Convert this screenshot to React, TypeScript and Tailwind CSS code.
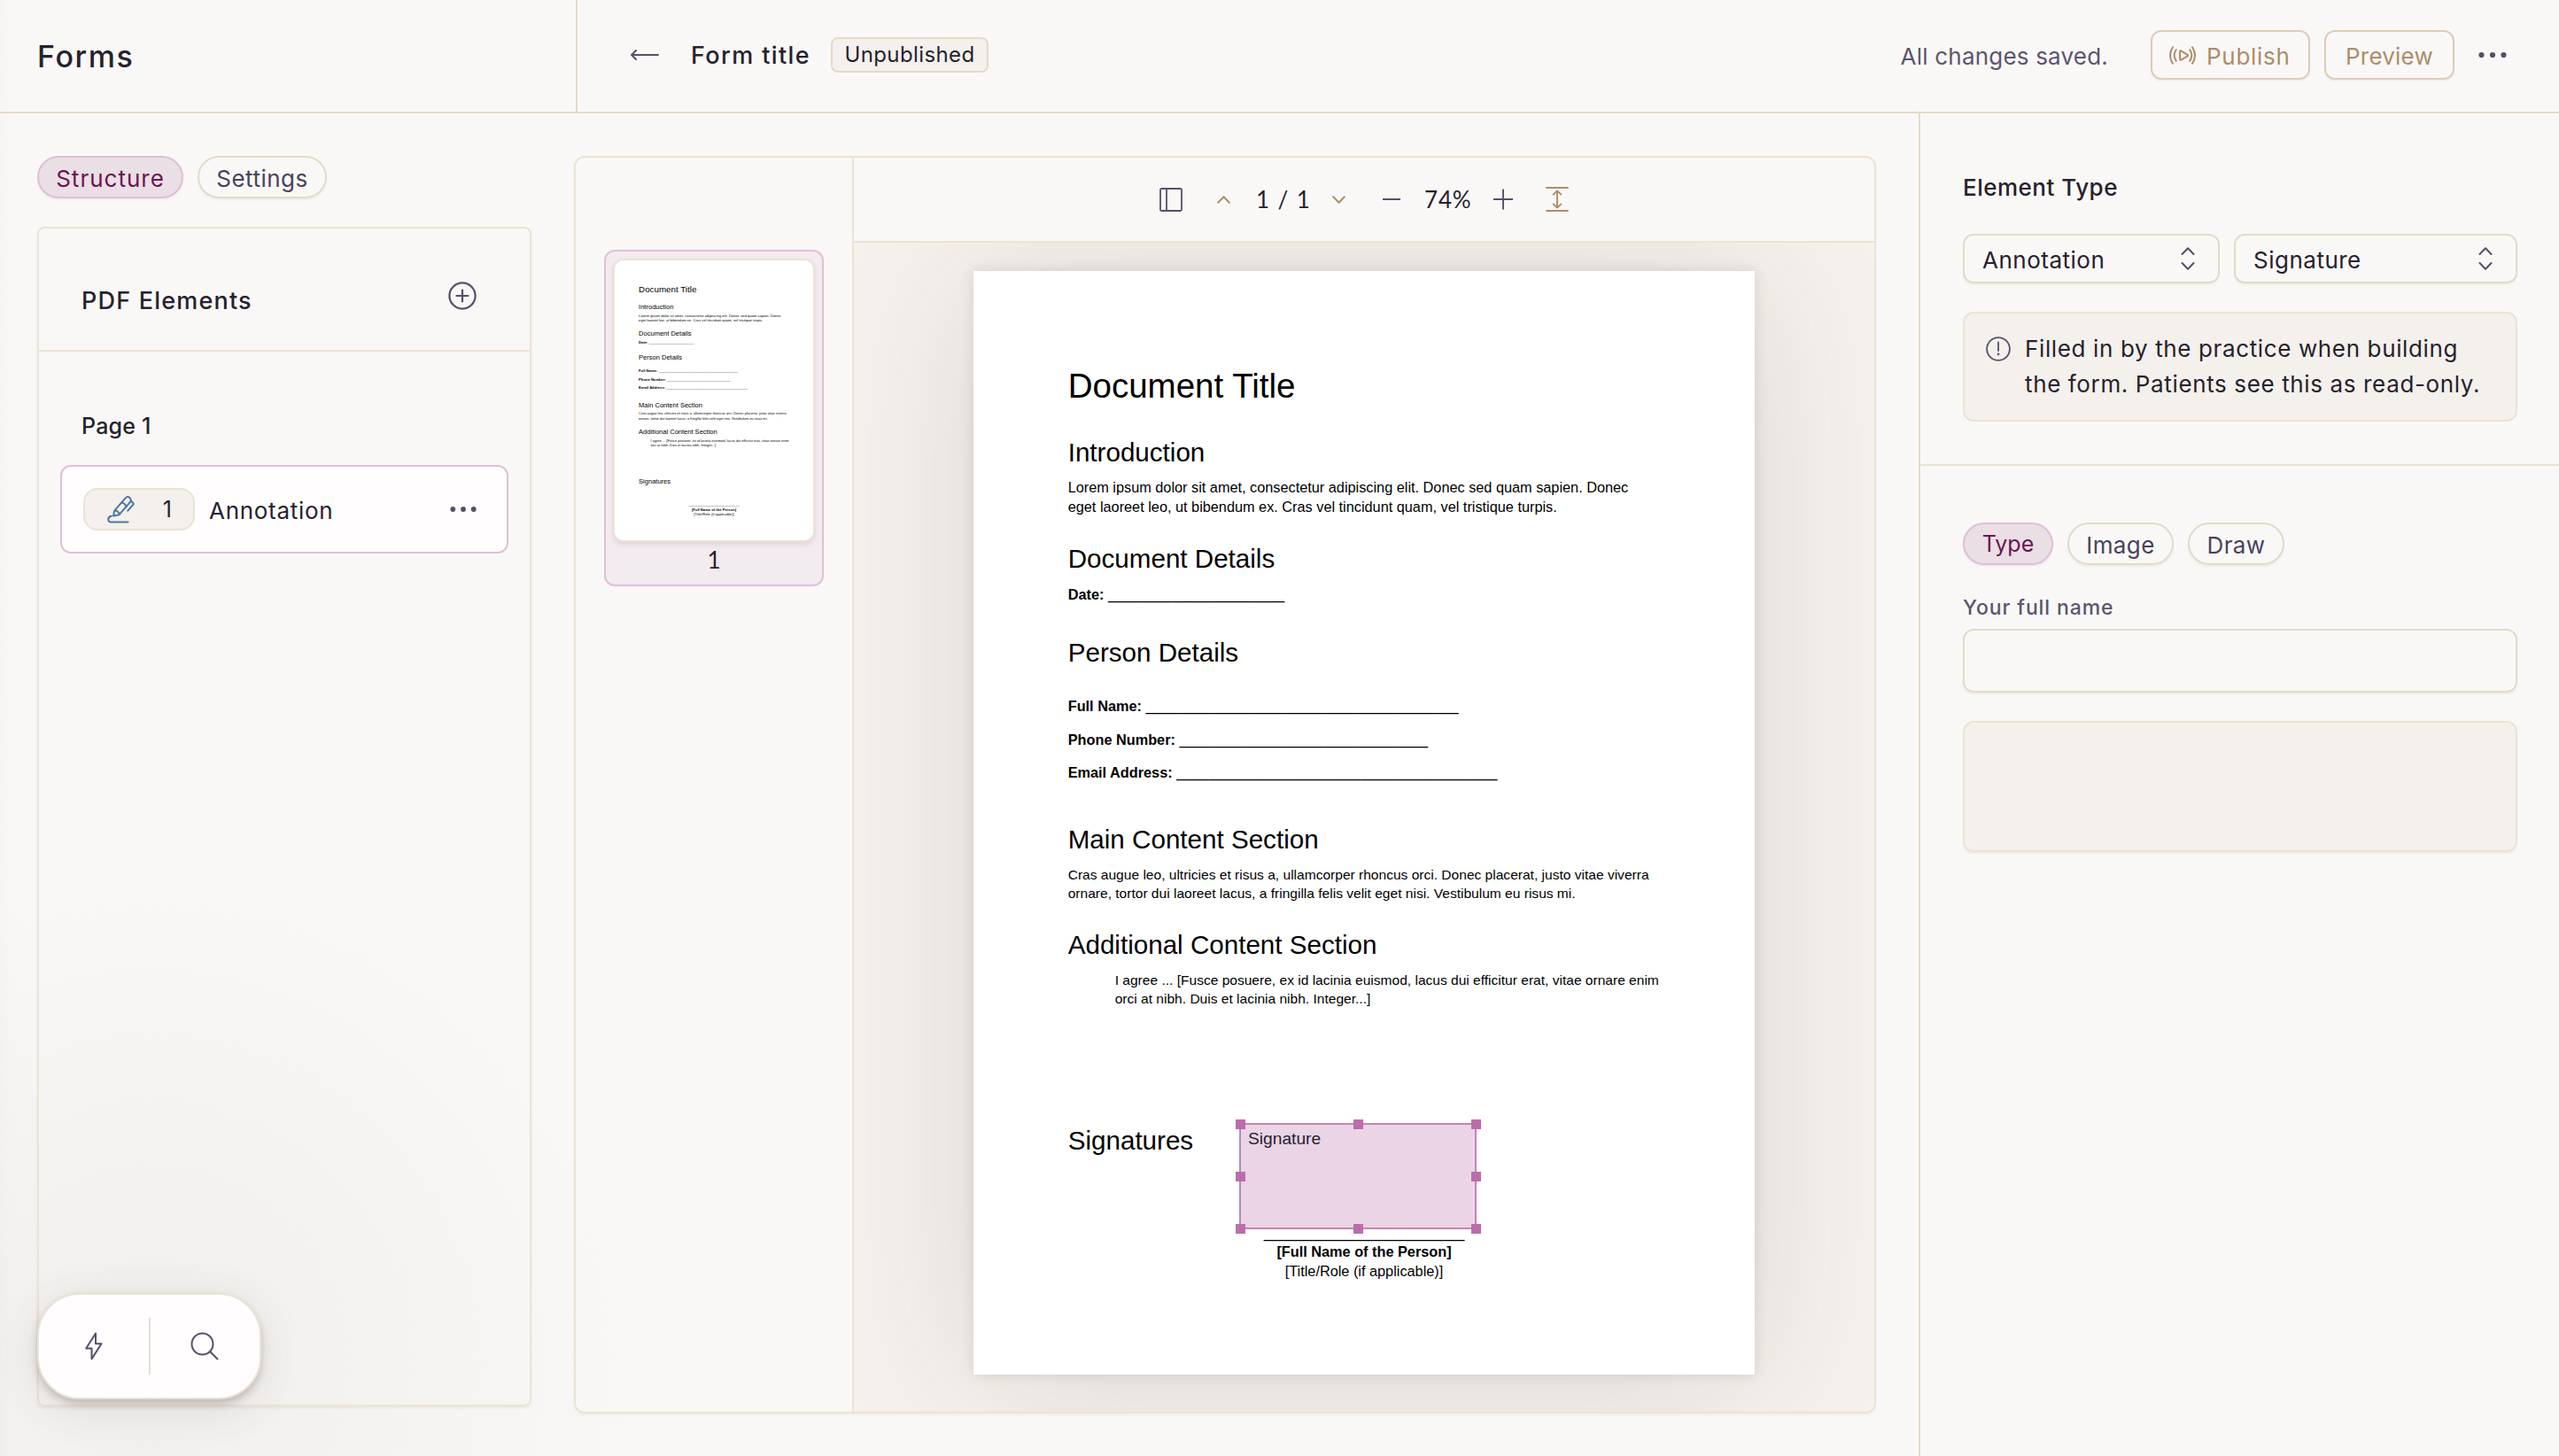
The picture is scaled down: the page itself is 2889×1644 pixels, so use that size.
import React from 'react';

interface IconProps {
    className?: string;
}

const BackArrowIcon: React.FC<IconProps> = ({ className }) => (
    <svg className={className} width="32" height="12" viewBox="0 0 32 12" fill="none" stroke="currentColor" strokeWidth="2" strokeLinecap="round" strokeLinejoin="round">
        <path d="M31 6H1M6 1L1 6l5 5" />
    </svg>
);

const BroadcastIcon: React.FC<IconProps> = ({ className }) => (
    <svg className={className} width="30" height="21" viewBox="0 0 30 21" fill="none" stroke="currentColor" strokeWidth="2" strokeLinecap="round" strokeLinejoin="round">
        <path d="M4 1.3C.3 7 .3 14 4 19.7M7.700 4.200c-2.600 4-2.600 8.600 0 12.600" />
        <path d="M12 6.200v8.600c0 .8.700 1.200 1.400.8l7.200-4.200c.6-.4.6-1.200 0-1.600l-7.200-4.400c-.7-.4-1.400 0-1.400.8z" />
        <path d="M23.300 4.200c2.600 4 2.600 8.600 0 12.600M26 1.300c3.700 5.700 3.700 12.700 0 18.400" />
    </svg>
);

const DotsIcon: React.FC<IconProps> = ({ className }) => (
    <svg className={className} width="32" height="8" viewBox="0 0 32 8" fill="currentColor">
        <circle cx="3.5" cy="4" r="3.1" />
        <circle cx="16" cy="4" r="3.1" />
        <circle cx="28.5" cy="4" r="3.1" />
    </svg>
);

const PlusCircleIcon: React.FC<IconProps> = ({ className }) => (
    <svg className={className} width="32" height="32" viewBox="0 0 32 32" fill="none" stroke="currentColor" strokeWidth="2.2" strokeLinecap="round">
        <circle cx="16" cy="16" r="14.6" />
        <path d="M16 9.500v13M9.500 16h13" />
    </svg>
);

const PenIcon: React.FC<IconProps> = ({ className }) => (
    <svg className={className} width="31" height="31" viewBox="0 0 31 31" fill="none" stroke="currentColor" strokeWidth="2" strokeLinecap="round" strokeLinejoin="round">
        <path d="M7 22.600l1-5.200c.1-.5.300-.9.600-1.200L20.400 2.600c1.400-1.600 3.600-1.800 5.100-.5s1.700 3.500.3 5.100L14 20.700c-.3.300-.7.600-1.100.7L7 22.600z" />
        <path d="M8.800 16.300c2.400.4 4.300 2 5 4.500M16.300 7.500c2.500.4 4.500 2.200 5.200 4.800" />
        <path d="M26.600 5.500l2.200 2c.8.7.9 1.900.2 2.700l-5.700 6.500" />
        <path d="M4.800 22.800C.2 23 .2 29.600 4.200 29.600h19.300" />
    </svg>
);

const SidebarIcon: React.FC<IconProps> = ({ className }) => (
    <svg className={className} width="26" height="27" viewBox="0 0 26 27" fill="none" stroke="currentColor" strokeWidth="1.8">
        <rect x="1" y="1" width="24" height="25" rx="1.5" />
        <path d="M8 1v25" />
    </svg>
);

const ChevronIcon: React.FC<IconProps> = ({ className }) => (
    <svg className={className} width="15" height="9" viewBox="0 0 15 9" fill="none" stroke="currentColor" strokeWidth="2" strokeLinecap="round" strokeLinejoin="round">
        <path d="M1.200 7.800L7.500 1.200l6.300 6.600" />
    </svg>
);

const FitHeightIcon: React.FC<IconProps> = ({ className }) => (
    <svg className={className} width="26" height="28" viewBox="0 0 26 28" fill="none" stroke="currentColor" strokeWidth="1.9" strokeLinecap="round" strokeLinejoin="round">
        <path d="M1 1h24M1 27h24M13 4.800v18.400M8.600 8.600L13 4.400l4.400 4.200M8.600 19.400l4.400 4.200 4.400-4.200" />
    </svg>
);

const SelectorIcon: React.FC<IconProps> = ({ className }) => (
    <svg className={className} width="16" height="26" viewBox="0 0 16 26" fill="none" stroke="currentColor" strokeWidth="2" strokeLinecap="round" strokeLinejoin="round">
        <path d="M1.500 8L8 1.200 14.500 8M1.500 18L8 24.800l6.500-6.800" />
    </svg>
);

const AlertIcon: React.FC<IconProps> = ({ className }) => (
    <svg className={className} width="28" height="28" viewBox="0 0 28 28" fill="none" stroke="currentColor" strokeWidth="1.9" strokeLinecap="round">
        <circle cx="14" cy="14" r="12.9" />
        <path d="M14 6.500v9.500" />
        <circle cx="14" cy="20" r=".5" />
    </svg>
);

const BoltIcon: React.FC<IconProps> = ({ className }) => (
    <svg className={className} width="20" height="32" viewBox="0 0 20 32" fill="none" stroke="currentColor" strokeWidth="2" strokeLinejoin="round">
        <path d="M12 1.500L1.200 18.500h6.300v12L18.500 13.200H12V1.500z" />
    </svg>
);

const SearchIcon: React.FC<IconProps> = ({ className }) => (
    <svg className={className} width="32" height="32" viewBox="0 0 32 32" fill="none" stroke="currentColor" strokeWidth="2" strokeLinecap="round">
        <circle cx="13.5" cy="13.5" r="12" />
        <path d="M22 22l8.500 8.500" />
    </svg>
);

const Pill: React.FC<{ label: string, active?: boolean, className: string }> = ({ label, active, className }) => (
    <button
        className={`h-12 pt-[2px] rounded-3xl border-2 flex items-center justify-center shadow-[0_2px_2px_rgba(90,75,60,0.06)] ${active ? 'bg-[#eadfe5] border-[#dfbfd6] text-[#6d1452]' : 'border-[#e4dac9] text-[#48435b]'} ${className}`}
    >
        {label}
    </button>
);

const Select: React.FC<{ value: string, className: string }> = ({ value, className }) => (
    <button className={`h-14 rounded-xl border-2 border-[#e4dac9] pl-5 pr-[26px] flex items-center justify-between shadow-[0_2px_2px_rgba(90,75,60,0.06)] ${className}`}>
        <span className="pt-[2px] text-[26px] tracking-[0.5px]">{value}</span>
        <SelectorIcon className="text-[#55506a]" />
    </button>
);

const FieldLine: React.FC<{ label: string, length: number, className: string }> = ({ label, length, className }) => (
    <p className={`text-[16.3px] leading-[21.5px] whitespace-nowrap ${className}`}>
        <b>{label}</b> {'_'.repeat(length)}
    </p>
);

const heading = 'text-[29.6px] leading-[34px] whitespace-nowrap';

// A4 page at its natural viewer size, the thumbnail scales it down
const DocumentPage: React.FC = () => (
    <div className="w-[882px] h-[1246px] bg-white text-black pl-[106.7px] pt-[108px] font-['Liberation_Sans',Arial,sans-serif] tracking-normal">
        <h1 className="text-[38.5px] leading-[44px] whitespace-nowrap">Document Title</h1>
        <h2 className={`mt-[36px] ${heading}`}>Introduction</h2>
        <p className="mt-[12px] text-[16.3px] leading-[21.5px] whitespace-nowrap">
            Lorem ipsum dolor sit amet, consectetur adipiscing elit. Donec sed quam sapien. Donec<br />
            eget laoreet leo, ut bibendum ex. Cras vel tincidunt quam, vel tristique turpis.
        </p>
        <h2 className={`mt-[31px] ${heading}`}>Document Details</h2>
        <FieldLine label="Date:" length={22} className="mt-[13px]" />
        <h2 className={`mt-[37.5px] ${heading}`}>Person Details</h2>
        <FieldLine label="Full Name:" length={39} className="mt-[33px]" />
        <FieldLine label="Phone Number:" length={31} className="mt-[16.5px]" />
        <FieldLine label="Email Address:" length={40} className="mt-[15.5px]" />
        <h2 className={`mt-[47.5px] ${heading}`}>Main Content Section</h2>
        <p className="mt-[12px] text-[15.56px] leading-[21px] whitespace-nowrap">
            Cras augue leo, ultricies et risus a, ullamcorper rhoncus orci. Donec placerat, justo vitae viverra<br />
            ornare, tortor dui laoreet lacus, a fringilla felis velit eget nisi. Vestibulum eu risus mi.
        </p>
        <h2 className={`mt-[31px] ${heading}`}>Additional Content Section</h2>
        <p className="mt-[11.5px] ml-[53px] text-[15.56px] leading-[21px] whitespace-nowrap">
            I agree ... [Fusce posuere, ex id lacinia euismod, lacus dui efficitur erat, vitae ornare enim<br />
            orci at nibh. Duis et lacinia nibh. Integer...]
        </p>
        <h2 className={`mt-[133.5px] ${heading}`}>Signatures</h2>
        <div className="mt-[76.5px] mr-[106.7px] text-center text-[16.3px] leading-[21.5px]">
            <p>{'_'.repeat(25)}</p>
            <p className="font-bold">[Full Name of the Person]</p>
            <p>[Title/Role (if applicable)]</p>
        </div>
    </div>
);

const handles = [
    'left-[-6px] top-[-6px]',
    'left-[127px] top-[-6px]',
    'left-[260px] top-[-6px]',
    'left-[-6px] top-[53px]',
    'left-[260px] top-[53px]',
    'left-[-6px] top-[112px]',
    'left-[127px] top-[112px]',
    'left-[260px] top-[112px]',
];

const SignatureField: React.FC = () => (
    <div className="absolute left-[300px] top-[962px] w-[268px] h-[120px] border-2 border-[#c384b7] bg-[#ebd4e6]">
        <span className="absolute left-[8px] top-[5px] text-[19.2px] leading-[22px] text-[#25222e] font-['Liberation_Sans',Arial,sans-serif]">Signature</span>
        {handles.map((pos) => (
            <span key={pos} className={`absolute w-[11px] h-[11px] bg-[#bb6dab] ${pos}`} />
        ))}
    </div>
);

const Header: React.FC = () => (
    <header className="h-32 border-b-2 border-[#e4dac9] flex shrink-0">
        <div className="w-[652px] border-r-2 border-[#e4dac9] pl-[42px] flex items-center shrink-0">
            <h1 className="text-[34px] font-medium tracking-[1.6px]">Forms</h1>
        </div>
        <div className="flex-1 pl-[60px] pr-[59px] pb-[2px] flex items-center">
            <BackArrowIcon className="text-[#55506a]" />
            <h2 className="pt-[2px] ml-[36px] w-[158px] text-[27px] font-medium tracking-[1.4px] whitespace-nowrap">Form title</h2>
            <span className="h-10 w-[178px] rounded-lg border-2 border-[#e4dac9] bg-[#f4f0eb] text-[24px] tracking-[0.4px] flex items-center justify-center">Unpublished</span>
            <span className="pt-[2px] ml-auto mr-[48px] text-[26px] tracking-[0.2px] text-[#5b5570]">All changes saved.</span>
            <button className="h-14 w-[180px] rounded-xl border-2 border-[#dccdb6] text-[#ab8e6a] flex items-center pl-[19px] gap-[12px] shadow-[0_2px_2px_rgba(90,75,60,0.06)]">
                <BroadcastIcon />
                <span className="pt-[2px] text-[26px] tracking-[0.7px]">Publish</span>
            </button>
            <button className="ml-4 h-14 w-[147px] rounded-xl border-2 border-[#dccdb6] text-[#ab8e6a] text-[26px] tracking-[0.2px] pt-[2px] flex items-center justify-center shadow-[0_2px_2px_rgba(90,75,60,0.06)]">
                Preview
            </button>
            <DotsIcon className="ml-[27px] text-[#55506a]" />
        </div>
    </header>
);

const StructurePanel: React.FC = () => (
    <aside className="w-[558px] flex flex-col pb-14 shrink-0">
        <div className="flex gap-4 shrink-0">
            <Pill label="Structure" active className="w-[165px] text-[26px] tracking-[1px]" />
            <Pill label="Settings" className="w-[146px] text-[26px] tracking-[0.5px]" />
        </div>
        <div className="mt-8 flex-1 rounded-lg border-2 border-[#ebe3d5] shadow-[0_2px_3px_rgba(90,75,60,0.08)]">
            <div className="h-[139px] border-b-2 border-[#ebe3d5] pl-12 pr-[60px] pt-[14px] flex items-center justify-between">
                <h3 className="mt-[14px] text-[27px] font-medium tracking-[1.2px]">PDF Elements</h3>
                <PlusCircleIcon className="text-[#55506a]" />
            </div>
            <h4 className="mt-[66px] ml-12 text-[25px] leading-[36px] font-medium tracking-[0.2px]">Page 1</h4>
            <div className="mt-[26px] mx-6 h-[100px] rounded-xl border-2 border-[#dfbfd6] bg-[#fffdfe] pl-6 pr-[34px] flex items-center">
                <div className="w-[126px] h-12 rounded-2xl border-2 border-[#ebe3d5] bg-[#f4f0eb] pl-[25px] pr-[24px] flex items-center justify-between">
                    <PenIcon className="text-[#4b76a6]" />
                    <span className="pt-px text-[25px]">1</span>
                </div>
                <span className="pt-[2px] ml-[16px] text-[26px] tracking-[0.7px]">Annotation</span>
                <DotsIcon className="ml-auto text-[#55506a] w-[30px]" />
            </div>
        </div>
    </aside>
);

const Toolbar: React.FC = () => (
    <div className="h-24 border-b-2 border-[#ebe3d5] flex items-center justify-center shrink-0 text-[#55506a]">
        <SidebarIcon />
        <ChevronIcon className="ml-[39px] text-[#ab8e6a]" />
        <span className="ml-[29px] w-[62px] font-[Lato,sans-serif] text-[26px] tracking-[1.4px] text-[#25222e] whitespace-nowrap">1 / 1</span>
        <ChevronIcon className="ml-[24px] rotate-180 text-[#ab8e6a]" />
        <svg className="ml-[42px]" width="20" height="2" viewBox="0 0 20 2"><path d="M0 1h20" stroke="currentColor" strokeWidth="2" /></svg>
        <span className="ml-[27px] w-[56px] font-[Lato,sans-serif] text-[26px] tracking-[0.8px] text-[#25222e] whitespace-nowrap">74%</span>
        <svg className="ml-[22px]" width="22" height="24" viewBox="0 0 22 24"><path d="M0 12h22M11 .5v23" stroke="currentColor" strokeWidth="1.9" /></svg>
        <FitHeightIcon className="ml-[37px] text-[#ab8e6a]" />
    </div>
);

const Viewer: React.FC = () => (
    <main className="w-[1470px] mb-12 rounded-xl border-2 border-[#ebe3d5] flex overflow-hidden shrink-0 shadow-[0_2px_3px_rgba(90,75,60,0.06)]">
        <div className="w-[314px] border-r-2 border-[#ebe3d5] pt-[104px] flex flex-col items-center shrink-0">
            <div className="w-[248px] h-[380px] rounded-xl border-2 border-[#dfbfd6] bg-[#f2ebef] p-2">
                <div className="w-[228px] h-[320px] rounded-xl border-2 border-[#ebe3d5] bg-white overflow-hidden shadow-[0_3px_5px_rgba(90,60,80,0.12)]">
                    <div className="origin-top-left scale-[0.254]">
                        <DocumentPage />
                    </div>
                </div>
                <p className="mt-[2px] text-center font-[Lato,sans-serif] text-[26px] leading-[36px]">1</p>
            </div>
        </div>
        <div className="flex-1 flex flex-col">
            <Toolbar />
            <div className="flex-1 bg-[#f5f1ec] pt-8 flex justify-center items-start overflow-hidden">
                <div className="relative shadow-[0_0_14px_rgba(60,45,45,0.12),0_8px_170px_rgba(60,50,50,0.13)]">
                    <DocumentPage />
                    <SignatureField />
                </div>
            </div>
        </div>
    </main>
);

const PropertiesPanel: React.FC = () => (
    <aside className="flex-1 border-l-2 border-[#e4dac9]">
        <section className="h-[398px] border-b-2 border-[#ebe3d5] pl-12 pr-[47px] pt-[66px]">
            <h3 className="text-[26px] leading-[36px] font-medium tracking-[0.5px]">Element Type</h3>
            <div className="mt-[34px] flex gap-4">
                <Select value="Annotation" className="w-[290px]" />
                <Select value="Signature" className="flex-1" />
            </div>
            <div className="mt-8 h-[124px] rounded-xl border-2 border-[#ebe3d5] bg-[#f4f0eb] pl-6 pt-5 flex items-start gap-4">
                <AlertIcon className="mt-[6px] text-[#5b5570] shrink-0" />
                <p className="text-[26px] leading-[40px] tracking-[0.63px] whitespace-nowrap">
                    Filled in by the practice when building<br />
                    the form. Patients see this as read-only.
                </p>
            </div>
        </section>
        <section className="pl-12 pr-[47px] pt-16">
            <div className="flex gap-4">
                <Pill label="Type" active className="w-[102px] text-[25px]" />
                <Pill label="Image" className="w-[120px] text-[26px] tracking-[0.4px]" />
                <Pill label="Draw" className="w-[109px] text-[26px] tracking-[0.4px]" />
            </div>
            <label className="block mt-[32px] text-[23px] leading-[32px] font-medium tracking-[0.9px] text-[#5b5570]">Your full name</label>
            <div className="mt-2 h-[72px] rounded-xl border-2 border-[#e4dac9] shadow-[0_2px_2px_rgba(90,75,60,0.06)]" />
            <div className="mt-8 h-[148px] rounded-xl border-2 border-[#ebe3d5] bg-[#f4f0eb] shadow-[0_2px_2px_rgba(90,75,60,0.06)]" />
        </section>
    </aside>
);

const QuickActions: React.FC = () => (
    <div className="absolute left-[42px] top-[1460px] w-[253px] h-[120px] rounded-[48px] border-2 border-[#ebe3d5] bg-[#fffdfe] flex items-center text-[#55506a] shadow-[0_5px_8px_rgba(70,60,50,0.24),0_10px_50px_rgba(70,60,60,0.12)]">
        <div className="flex-1 flex justify-center"><BoltIcon /></div>
        <div className="w-[2px] h-16 bg-[#e8e0d3]" />
        <div className="flex-1 flex justify-center"><SearchIcon /></div>
    </div>
);

const App: React.FC = () => (
    <div className="relative w-full h-[1644px] overflow-hidden flex flex-col bg-[#faf8f6] bg-[linear-gradient(to_right,rgba(60,50,60,0.015),transparent_16px),radial-gradient(circle_at_170px_1540px,rgba(90,90,90,0.05)_0px,rgba(90,90,80,0.04)_200px,rgba(90,90,80,0.018)_380px,transparent_560px)] text-[#25222e] font-[Inter,sans-serif]">
        <Header />
        <div className="flex-1 flex min-h-0">
            <div className="flex gap-12 pt-12 pl-[42px] pr-12 shrink-0">
                <StructurePanel />
                <Viewer />
            </div>
            <PropertiesPanel />
        </div>
        <QuickActions />
    </div>
);

export default App;
